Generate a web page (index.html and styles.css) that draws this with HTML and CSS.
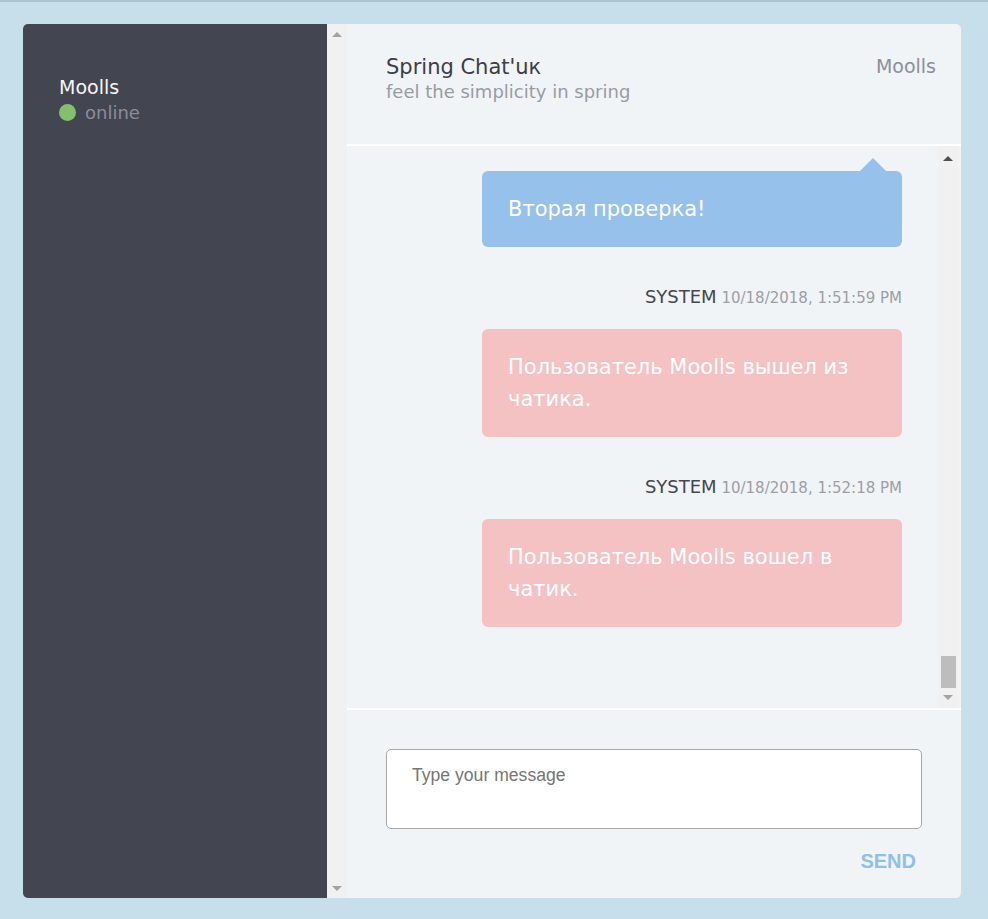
FILE: index.html
```html
<!DOCTYPE html>
<html lang="ru">
<head>
<meta charset="utf-8">
<title>Spring Chat'uк</title>
<link rel="stylesheet" href="styles.css">
</head>
<body>
<div class="app">
  <aside class="sidebar">
    <div class="user-name">Moolls</div>
    <div class="user-status"><span class="dot"></span>online</div>
  </aside>
  <div class="vscroll">
    <span class="arrow up"></span>
    <span class="arrow down"></span>
  </div>
  <main class="main">
    <header class="header">
      <div class="brand">
        <div class="title">Spring Chat'uк</div>
        <div class="subtitle">feel the simplicity in spring</div>
      </div>
      <div class="current-user">Moolls</div>
    </header>
    <section class="messages">
      <div class="list">
        <div class="bubble blue tail">Вторая проверка!</div>
        <div class="meta"><span class="author">SYSTEM</span> <span class="time">10/18/2018, 1:51:59 PM</span></div>
        <div class="bubble pink">Пользователь Moolls вышел из чатика.</div>
        <div class="meta"><span class="author">SYSTEM</span> <span class="time">10/18/2018, 1:52:18 PM</span></div>
        <div class="bubble pink">Пользователь Moolls вошел в чатик.</div>
      </div>
      <div class="mscroll">
        <span class="arrow up dark"></span>
        <span class="thumb"></span>
        <span class="arrow down"></span>
      </div>
    </section>
    <footer class="composer">
      <textarea class="input" placeholder="Type your message"></textarea>
      <div class="actions"><button class="send">SEND</button></div>
    </footer>
  </main>
</div>
</body>
</html>
```

FILE: styles.css
```css
* { box-sizing: border-box; }
html, body { height: 100%; }
body {
  margin: 0;
  background: #c6dfea;
  border-top: 2px solid #aec3cf;
  font-family: "DejaVu Sans", "Noto Sans", sans-serif;
  padding: 22px 27px 21px 23px;
}
.app {
  width: 938px;
  height: 874px;
  display: flex;
  border-radius: 5px;
  overflow: hidden;
}
.sidebar {
  width: 304px;
  background: #434551;
  padding: 51px 36px;
  flex-shrink: 0;
}
.user-name {
  color: #f5f5f7;
  font-size: 19px;
  line-height: 25px;
}
.user-status {
  display: flex;
  align-items: center;
  color: #8c8d95;
  font-size: 18px;
  line-height: 25px;
}
.dot {
  width: 17px;
  height: 17px;
  border-radius: 50%;
  background: #84c06c;
  margin-right: 9px;
}
.vscroll {
  width: 20px;
  flex-shrink: 0;
  background: #f1f1f1;
  display: flex;
  flex-direction: column;
  justify-content: space-between;
  align-items: center;
  padding: 8px 0 7px;
}
.arrow {
  width: 0;
  height: 0;
  border-left: 5px solid transparent;
  border-right: 5px solid transparent;
}
.arrow.up { border-bottom: 5px solid #a3a3a3; }
.arrow.down { border-top: 5px solid #a3a3a3; }
.arrow.up.dark { border-bottom-color: #505050; }
.main {
  flex: 1;
  background: #f0f4f7;
  display: flex;
  flex-direction: column;
  min-width: 0;
}
.header {
  height: 122px;
  display: flex;
  justify-content: space-between;
  align-items: flex-start;
  padding: 30px 25px 0 39px;
  border-bottom: 2px solid #ffffff;
  flex-shrink: 0;
}
.title {
  font-size: 21px;
  line-height: 26px;
  color: #3c3d45;
}
.subtitle {
  font-size: 18px;
  line-height: 24px;
  color: #9a9ba2;
}
.current-user {
  font-size: 19px;
  line-height: 24px;
  color: #8e8f96;
}
.messages {
  flex: 1;
  display: flex;
  min-height: 0;
  border-bottom: 2px solid #ffffff;
}
.list {
  flex: 1;
  display: flex;
  flex-direction: column;
  align-items: flex-end;
  padding: 25px 36px 0 0;
  overflow: hidden;
}
.bubble {
  position: relative;
  width: 420px;
  border-radius: 6px;
  padding: 22px 26px;
  color: #ffffff;
  font-size: 21px;
  line-height: 32px;
}
.blue { background: #96c1ea; }
.pink { background: #f4c2c3; }
.tail::before {
  content: "";
  position: absolute;
  top: -13px;
  right: 16px;
  border-left: 13px solid transparent;
  border-right: 13px solid transparent;
  border-bottom: 13px solid #96c1ea;
}
.meta {
  margin: 40px 0 21px;
  font-size: 15px;
  line-height: 20px;
}
.author { color: #45464e; font-size: 18px; }
.time { color: #9d9ea4; }
.mscroll {
  width: 20px;
  margin-right: 3px;
  background: #f1f1f1;
  display: flex;
  flex-direction: column;
  align-items: center;
  padding: 10px 0 8px;
}
.mscroll .thumb {
  margin-top: auto;
  width: 15px;
  height: 32px;
  background: #bdbdbd;
  margin-bottom: 7px;
}
.composer {
  height: 188px;
  padding: 39px 39px 0 39px;
  flex-shrink: 0;
}
.input {
  display: block;
  width: 100%;
  height: 80px;
  border: 1px solid #a9a9a9;
  border-radius: 5px;
  background: #ffffff;
  padding: 15px 25px;
  font-family: "Liberation Sans", Arial, sans-serif;
  font-size: 17.6px;
  resize: none;
  outline: none;
}
.input::placeholder { color: #757575; }
.actions {
  display: flex;
  justify-content: flex-end;
  padding-top: 21px;
  padding-right: 6px;
}
.send {
  border: none;
  background: none;
  padding: 0;
  font-family: "Liberation Sans", Arial, sans-serif;
  font-weight: bold;
  font-size: 20px;
  color: #8ec0ea;
  cursor: pointer;
}
```
